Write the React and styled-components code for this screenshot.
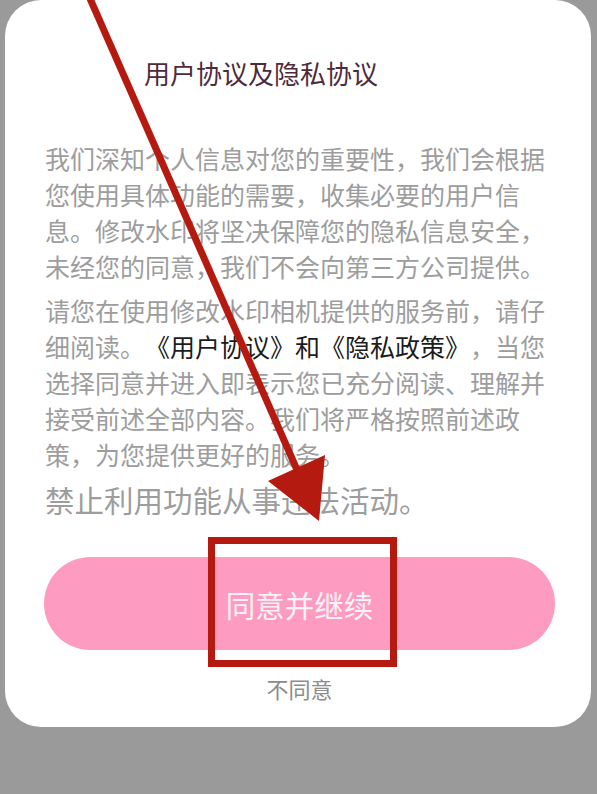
import React from "react";
import styled, { createGlobalStyle } from "styled-components";

const Global = createGlobalStyle`
  html, body {
    margin: 0;
    padding: 0;
    background-color: #9a9a9a;
  }

  body {
    font-family: "Noto Sans CJK SC", "Noto Sans", sans-serif;
    text-spacing-trim: space-all;
  }
`;

const Page = styled.div`
  position: relative;
  height: 794px;
  overflow: hidden;
  background-color: #9a9a9a;
`;

const Card = styled.div`
  display: flex;
  flex-direction: column;

  width: 586px;
  margin-left: 5px;
  padding: 0 36px 24px 39px;
  box-sizing: border-box;

  background-color: #ffffff;
  border-radius: 36px;
`;

const Title = styled.h1`
  margin: 55px 0 0;
  padding-left: 100px;

  font-size: 26px;
  font-weight: 400;
  line-height: 36px;
  color: #4d2b3d;
`;

const Paragraph = styled.p`
  width: 506px;
  margin: ${(p) => p.$top}px 0 0 1px;

  font-size: 25px;
  line-height: 36px;
  color: #9d9d9d;
  text-spacing-trim: space-all;
`;

const Link = styled.span`
  color: #1c1c1c;
`;

const Warning = styled.p`
  margin: 7px 0 0 1px;

  font-size: 29.5px;
  line-height: 40px;
  color: #9d9d9d;
`;

const AgreeButton = styled.button`
  display: flex;
  align-items: center;
  justify-content: center;

  height: 93px;
  margin-top: 38px;
  padding: 0;

  border: none;
  border-radius: 47px;
  background-color: #fe9bc0;

  font-family: inherit;
  font-size: 29.5px;
  color: #fdf1f6;
`;

const Decline = styled.div`
  margin-top: 23px;

  text-align: center;
  font-size: 22px;
  line-height: 30px;
  color: #8c8c8c;
`;

const Annotation = styled.svg`
  position: absolute;
  top: 0;
  left: 0;
  pointer-events: none;
`;

export default function App() {
  return (
    <Page>
      <Global />
      <Card>
        <Title>用户协议及隐私协议</Title>
        <Paragraph $top={49}>
          我们深知个人信息对您的重要性，我们会根据您使用具体功能的需要，收集必要的用户信息。修改水印将坚决保障您的隐私信息安全，未经您的同意，我们不会向第三方公司提供。
        </Paragraph>
        <Paragraph $top={8}>
          请您在使用修改水印相机提供的服务前，请仔细阅读。
          <Link>《用户协议》和《隐私政策》</Link>
          ，当您选择同意并进入即表示您已充分阅读、理解并接受前述全部内容。我们将严格按照前述政策，为您提供更好的服务。
        </Paragraph>
        <Warning>禁止利用功能从事违法活动。</Warning>
        <AgreeButton>同意并继续</AgreeButton>
        <Decline>不同意</Decline>
      </Card>

      <Annotation width="597" height="794" viewBox="0 0 597 794">
        <line x1="88" y1="-6" x2="298" y2="472" stroke="#b51a10" strokeWidth="7" />
        <polygon points="319,521 268,481 325,455" fill="#b51a10" />
        <rect
          x="211.5"
          y="540.5"
          width="182"
          height="123"
          fill="none"
          stroke="#b51a10"
          strokeWidth="7"
        />
      </Annotation>
    </Page>
  );
}
